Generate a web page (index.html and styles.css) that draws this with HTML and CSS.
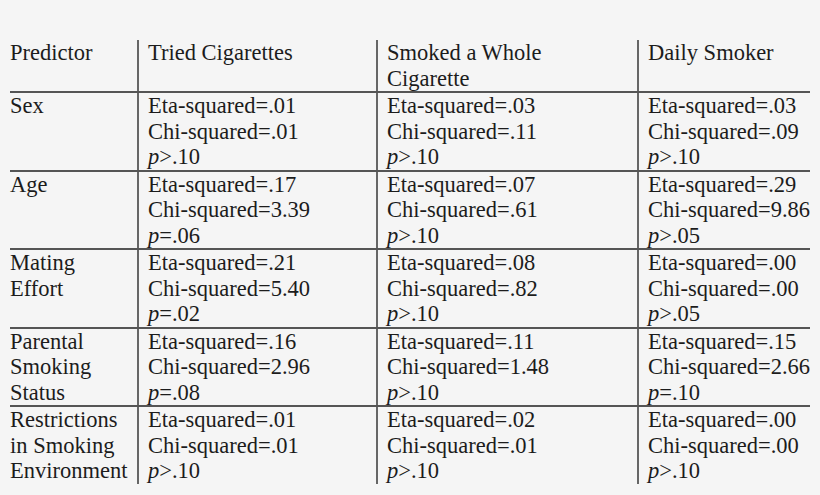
FILE: index.html
```html
<!DOCTYPE html>
<html lang="en">
<head>
<meta charset="utf-8">
<title>Predictors of smoking</title>
<link rel="stylesheet" href="styles.css">
</head>
<body>
<table class="stats">
  <colgroup>
    <col class="c-pred">
    <col class="c-tried">
    <col class="c-whole">
    <col class="c-daily">
  </colgroup>
  <thead>
    <tr>
      <th class="pred">Predictor</th>
      <th>Tried Cigarettes</th>
      <th><span class="ln">Smoked a Whole</span><span class="ln">Cigarette</span></th>
      <th>Daily Smoker</th>
    </tr>
  </thead>
  <tbody>
    <tr>
      <td class="pred">Sex</td>
      <td><span class="ln">Eta-squared=.01</span><span class="ln">Chi-squared=.01</span><span class="ln"><i>p</i>&gt;.10</span></td>
      <td><span class="ln">Eta-squared=.03</span><span class="ln">Chi-squared=.11</span><span class="ln"><i>p</i>&gt;.10</span></td>
      <td><span class="ln">Eta-squared=.03</span><span class="ln">Chi-squared=.09</span><span class="ln"><i>p</i>&gt;.10</span></td>
    </tr>
    <tr>
      <td class="pred">Age</td>
      <td><span class="ln">Eta-squared=.17</span><span class="ln">Chi-squared=3.39</span><span class="ln"><i>p</i>=.06</span></td>
      <td><span class="ln">Eta-squared=.07</span><span class="ln">Chi-squared=.61</span><span class="ln"><i>p</i>&gt;.10</span></td>
      <td><span class="ln">Eta-squared=.29</span><span class="ln">Chi-squared=9.86</span><span class="ln"><i>p</i>&gt;.05</span></td>
    </tr>
    <tr>
      <td class="pred">Mating Effort</td>
      <td><span class="ln">Eta-squared=.21</span><span class="ln">Chi-squared=5.40</span><span class="ln"><i>p</i>=.02</span></td>
      <td><span class="ln">Eta-squared=.08</span><span class="ln">Chi-squared=.82</span><span class="ln"><i>p</i>&gt;.10</span></td>
      <td><span class="ln">Eta-squared=.00</span><span class="ln">Chi-squared=.00</span><span class="ln"><i>p</i>&gt;.05</span></td>
    </tr>
    <tr>
      <td class="pred">Parental Smoking Status</td>
      <td><span class="ln">Eta-squared=.16</span><span class="ln">Chi-squared=2.96</span><span class="ln"><i>p</i>=.08</span></td>
      <td><span class="ln">Eta-squared=.11</span><span class="ln">Chi-squared=1.48</span><span class="ln"><i>p</i>&gt;.10</span></td>
      <td><span class="ln">Eta-squared=.15</span><span class="ln">Chi-squared=2.66</span><span class="ln"><i>p</i>=.10</span></td>
    </tr>
    <tr class="last">
      <td class="pred">Restrictions in Smoking Environment</td>
      <td><span class="ln">Eta-squared=.01</span><span class="ln">Chi-squared=.01</span><span class="ln"><i>p</i>&gt;.10</span></td>
      <td><span class="ln">Eta-squared=.02</span><span class="ln">Chi-squared=.01</span><span class="ln"><i>p</i>&gt;.10</span></td>
      <td><span class="ln">Eta-squared=.00</span><span class="ln">Chi-squared=.00</span><span class="ln"><i>p</i>&gt;.10</span></td>
    </tr>
  </tbody>
</table>
</body>
</html>
```

FILE: styles.css
```css
html, body {
  margin: 0;
  padding: 0;
  background: #f5f5f5;
}

body {
  padding: 40px 0 0 10px;
  font-family: "Liberation Serif", "Times New Roman", serif;
  font-size: 22.5px;
  line-height: 25.5px;
  color: #1c1c1c;
}

.stats {
  border-collapse: collapse;
  table-layout: fixed;
  width: 800px;
}

.c-pred { width: 128px; }
.c-tried { width: 239px; }
.c-whole { width: 261px; }
.c-daily { width: 172px; }

.stats th,
.stats td {
  font-weight: normal;
  text-align: left;
  vertical-align: top;
  padding: 0 0 0 9px;
  border-left: 2px solid #666;
  border-bottom: 2px solid #555;
}

.stats th.pred,
.stats td.pred {
  padding: 0 6px 0 0;
  border-left: none;
}

.stats td {
  white-space: nowrap;
}

.stats td.pred {
  white-space: normal;
}

.stats tr.last td {
  border-bottom: none;
}

.ln {
  display: block;
}

.ln i {
  font-style: italic;
}
```
